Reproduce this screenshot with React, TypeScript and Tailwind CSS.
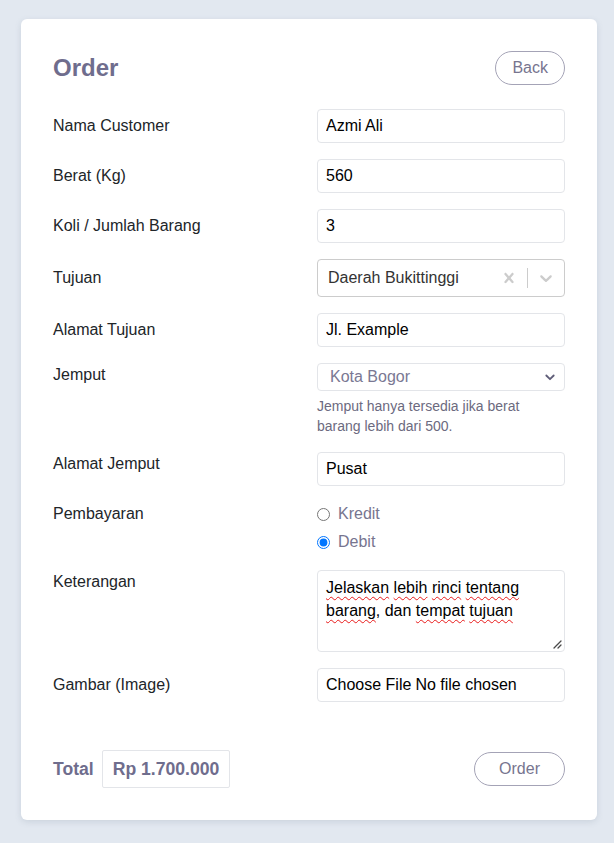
import React from "react";

const font = { fontFamily: '"Liberation Sans", Arial, sans-serif' };

function Label({ children }: { children: React.ReactNode }) {
  return <div className="text-[16px] leading-6 text-[#212529]">{children}</div>;
}

function TextInput({ value }: { value: string }) {
  return (
    <input
      readOnly
      defaultValue={value}
      className="h-[34px] w-full rounded border border-[#e3e5e9] bg-white px-2 text-[16px] text-black outline-none"
    />
  );
}

function Sq({ children }: { children: React.ReactNode }) {
  return (
    <span className="underline decoration-wavy decoration-[#e81b1b] decoration-[1px] underline-offset-[3px]">
      {children}
    </span>
  );
}

export default function App() {
  return (
    <div className="min-h-screen bg-[#e2e8f0] pt-[19px] pb-6" style={font}>
      <div className="ml-[21px] w-[576px] rounded-md bg-white p-8 shadow-[0_2px_6px_rgba(100,116,139,0.18)]">
        {/* Header */}
        <div className="flex h-[34px] items-center justify-between">
          <h1 className="text-[24px] font-bold leading-none text-[#6f6d8d]">Order</h1>
          <button className="h-[34px] rounded-full border border-[#a4a3b6] px-4 text-[16px] leading-none text-[#77758f]">
            Back
          </button>
        </div>

        {/* Form */}
        <div className="mt-6 flex flex-col gap-4">
          <div className="grid grid-cols-[248px_248px] items-center gap-x-4">
            <Label>Nama Customer</Label>
            <TextInput value="Azmi Ali" />
          </div>
          <div className="grid grid-cols-[248px_248px] items-center gap-x-4">
            <Label>Berat (Kg)</Label>
            <TextInput value="560" />
          </div>
          <div className="grid grid-cols-[248px_248px] items-center gap-x-4">
            <Label>Koli / Jumlah Barang</Label>
            <TextInput value="3" />
          </div>
          <div className="grid grid-cols-[248px_248px] items-center gap-x-4">
            <Label>Tujuan</Label>
            <div className="flex h-[38px] items-center rounded border border-[#cccccc] bg-white">
              <div className="flex-1 pl-[10px] text-[16px] text-[#333333]">Daerah Bukittinggi</div>
              <div className="flex h-full w-[36px] items-center justify-center">
                <svg width="20" height="20" viewBox="0 0 20 20" fill="#cccccc">
                  <path d="M14.348 14.849c-0.469 0.469-1.229 0.469-1.697 0l-2.651-3.030-2.651 3.029c-0.469 0.469-1.229 0.469-1.697 0-0.469-0.469-0.469-1.229 0-1.697l2.758-3.15-2.759-3.152c-0.469-0.469-0.469-1.228 0-1.697s1.228-0.469 1.697 0l2.652 3.031 2.651-3.031c0.469-0.469 1.228-0.469 1.697 0s0.469 1.229 0 1.697l-2.758 3.152 2.758 3.15c0.469 0.469 0.469 1.229 0 1.698z" />
                </svg>
              </div>
              <div className="h-[20px] w-px bg-[#cccccc]" />
              <div className="flex h-full w-[36px] items-center justify-center">
                <svg width="20" height="20" viewBox="0 0 20 20" fill="#cccccc">
                  <path d="M4.516 7.548c0.436-0.446 1.043-0.481 1.576 0l3.908 3.747 3.908-3.747c0.533-0.481 1.141-0.446 1.574 0 0.436 0.445 0.408 1.197 0 1.615-0.406 0.418-4.695 4.502-4.695 4.502-0.217 0.223-0.502 0.335-0.787 0.335s-0.57-0.112-0.789-0.335c0 0-4.287-4.084-4.695-4.502s-0.436-1.17 0-1.615z" />
                </svg>
              </div>
            </div>
          </div>
          <div className="grid grid-cols-[248px_248px] items-center gap-x-4">
            <Label>Alamat Tujuan</Label>
            <TextInput value="Jl. Example" />
          </div>
          <div className="grid grid-cols-[248px_248px] items-start gap-x-4">
            <Label>Jemput</Label>
            <div>
              <div className="flex h-[28px] items-center justify-between rounded border border-[#e3e5e9] bg-white pl-3 pr-[9px]">
                <span className="text-[16px] text-[#7a7893]">Kota Bogor</span>
                <svg width="10" height="7" viewBox="0 0 10 7" fill="none">
                  <path d="M1.3 1.5 L5 5.2 L8.7 1.5" stroke="#5f5d78" strokeWidth="1.8" strokeLinecap="round" strokeLinejoin="round" />
                </svg>
              </div>
              <p className="mt-[5px] text-[14px] leading-5 text-[#6c6a80]">
                Jemput hanya tersedia jika berat barang lebih dari 500.
              </p>
            </div>
          </div>
          <div className="grid grid-cols-[248px_248px] items-start gap-x-4">
            <Label>Alamat Jemput</Label>
            <TextInput value="Pusat" />
          </div>
          <div className="grid grid-cols-[248px_248px] items-start gap-x-4">
            <Label>Pembayaran</Label>
            <div className="flex flex-col gap-1">
              <label className="flex h-6 items-center">
                <input type="radio" name="pay" className="m-0 h-[13px] w-[13px]" />
                <span className="ml-2 text-[16px] text-[#77758f]">Kredit</span>
              </label>
              <label className="flex h-6 items-center">
                <input type="radio" name="pay" defaultChecked className="m-0 h-[13px] w-[13px]" />
                <span className="ml-2 text-[16px] text-[#77758f]">Debit</span>
              </label>
            </div>
          </div>
          <div className="grid grid-cols-[248px_248px] items-start gap-x-4">
            <Label>Keterangan</Label>
            <div className="relative h-[82px] rounded border border-[#e3e5e9] bg-white px-2 pt-[5px] text-[16px] leading-[23px] text-black">
              <Sq>Jelaskan</Sq> <Sq>lebih</Sq> <Sq>rinci</Sq> <Sq>tentang</Sq> <Sq>barang</Sq>, dan <Sq>tempat</Sq>{" "}
              <Sq>tujuan</Sq>
              <svg className="absolute bottom-[2px] right-[2px]" width="9" height="9" viewBox="0 0 9 9">
                <path d="M8 1 L1 8 M8 5 L5 8" stroke="#4a4a4a" strokeWidth="1.3" strokeLinecap="round" />
              </svg>
            </div>
          </div>
          <div className="grid grid-cols-[248px_248px] items-center gap-x-4">
            <Label>Gambar (Image)</Label>
            <div className="flex h-[34px] items-center rounded border border-[#e3e5e9] bg-white px-2 text-[16px] text-black">
              <span className="mr-1">Choose File</span>
              <span>No file chosen</span>
            </div>
          </div>
        </div>

        {/* Footer */}
        <div className="mt-12 flex items-center justify-between">
          <div className="flex items-center gap-2">
            <span className="text-[17.6px] font-bold text-[#6f6d8d]">Total</span>
            <div className="rounded-[2px] border border-[#e3e5e9] px-[10px] py-[6px] text-[17.6px] font-bold leading-6 text-[#6f6d8d]">
              Rp 1.700.000
            </div>
          </div>
          <button className="h-[34px] rounded-full border border-[#a4a3b6] px-6 text-[16px] leading-none text-[#77758f]">
            Order
          </button>
        </div>
      </div>
    </div>
  );
}
